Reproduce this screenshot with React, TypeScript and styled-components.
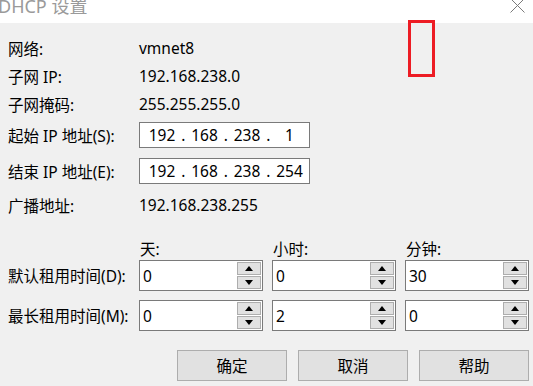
import { Fragment } from "react";
import styled, { createGlobalStyle } from "styled-components";

const GlobalStyle = createGlobalStyle`
  body {
    margin: 0;
    background: #f0f0f0;
  }
  * {
    box-sizing: border-box;
  }
`;

const Window = styled.div`
  position: relative;
  width: 533px;
  height: 386px;
  overflow: hidden;
  background: #f0f0f0;
  color: #000;
  font-family: "Noto Sans", "Noto Sans CJK SC", sans-serif;
  font-size: 15.5px;
`;

const TitleBar = styled.div`
  height: 23px;
  background: #fff;
  overflow: hidden;
  display: flex;
  align-items: flex-start;
  justify-content: space-between;
`;

const TitleText = styled.div`
  margin-left: -2px;
  margin-top: -3px;
  font-size: 18px;
  line-height: 18px;
  color: #9a9a9a;
`;

const CloseIcon = styled.svg`
  margin-right: 8px;
  margin-top: -2px;
  flex: none;
`;

const Body = styled.div`
  padding: 11px 0 0 8px;
`;

const Row = styled.div<{ $h: number; $mt?: number }>`
  display: flex;
  align-items: center;
  height: ${(p) => p.$h}px;
  margin-top: ${(p) => p.$mt ?? 0}px;
`;

const Label = styled.div`
  width: 131px;
  flex: none;
  white-space: nowrap;
`;

const Value = styled.div`
  white-space: nowrap;
`;

const IpBox = styled.div`
  width: 171px;
  height: 26px;
  background: #fff;
  border: 1px solid #7a7a7a;
  display: flex;
  align-items: center;
  padding-left: 5px;
`;

const IpField = styled.span`
  width: 34px;
  text-align: center;
`;

const IpDot = styled.span`
  width: 8.5px;
  text-align: center;
`;

const GridRow = styled.div<{ $h: number; $mt: number }>`
  display: grid;
  grid-template-columns: 122px repeat(3, 124px);
  column-gap: 9px;
  align-items: center;
  height: ${(p) => p.$h}px;
  margin-top: ${(p) => p.$mt}px;
`;

const GridLabel = styled.div`
  white-space: nowrap;
`;

const ColHead = styled.div`
  padding-left: 1px;
`;

const SpinBox = styled.div`
  display: flex;
  height: 31px;
  background: #fff;
  border: 1px solid #7a7a7a;
  padding: 1px;
`;

const SpinValue = styled.div`
  flex: 1;
  display: flex;
  align-items: center;
  padding-left: 2px;
`;

const SpinButtons = styled.div`
  width: 24px;
  display: flex;
  flex-direction: column;
  gap: 1px;
`;

const SpinButton = styled.div`
  flex: 1;
  background: #e1e1e1;
  border: 1px solid #adadad;
  display: flex;
  align-items: center;
  justify-content: center;
`;

const Arrow = styled.span<{ $down?: boolean }>`
  width: 0;
  height: 0;
  border-left: 4.5px solid transparent;
  border-right: 4.5px solid transparent;
  ${(p) =>
    p.$down ? "border-top: 5px solid #000;" : "border-bottom: 5px solid #000;"}
`;

const ButtonBar = styled.div`
  display: flex;
  justify-content: flex-end;
  gap: 11px;
  padding-right: 4px;
  margin-top: 19px;
`;

const DlgButton = styled.div`
  width: 110px;
  height: 31px;
  background: #e1e1e1;
  border: 1px solid #adadad;
  display: flex;
  align-items: center;
  justify-content: center;
`;

const Marker = styled.div`
  position: absolute;
  left: 408px;
  top: 20px;
  width: 27px;
  height: 57px;
  border: 3px solid #ed1c24;
`;

const IpInput = ({ parts }: { parts: string[] }) => (
  <IpBox>
    {parts.map((p, i) => (
      <Fragment key={i}>
        {i > 0 && <IpDot>.</IpDot>}
        <IpField>{p}</IpField>
      </Fragment>
    ))}
  </IpBox>
);

const Spin = ({ value }: { value: string }) => (
  <SpinBox>
    <SpinValue>{value}</SpinValue>
    <SpinButtons>
      <SpinButton>
        <Arrow />
      </SpinButton>
      <SpinButton>
        <Arrow $down />
      </SpinButton>
    </SpinButtons>
  </SpinBox>
);

export default function App() {
  return (
    <>
      <GlobalStyle />
      <Window>
        <TitleBar>
          <TitleText>DHCP 设置</TitleText>
          <CloseIcon width="15" height="15" viewBox="0 0 15 15">
            <path d="M0.5 0.5 L14.5 14.5 M14.5 0.5 L0.5 14.5" stroke="#7a7a7a" strokeWidth="1" />
          </CloseIcon>
        </TitleBar>
        <Body>
          <Row $h={28}>
            <Label>网络:</Label>
            <Value>vmnet8</Value>
          </Row>
          <Row $h={28}>
            <Label>子网 IP:</Label>
            <Value>192.168.238.0</Value>
          </Row>
          <Row $h={28}>
            <Label>子网掩码:</Label>
            <Value>255.255.255.0</Value>
          </Row>
          <Row $h={26} $mt={4}>
            <Label>起始 IP 地址(S):</Label>
            <IpInput parts={["192", "168", "238", "1"]} />
          </Row>
          <Row $h={26} $mt={10}>
            <Label>结束 IP 地址(E):</Label>
            <IpInput parts={["192", "168", "238", "254"]} />
          </Row>
          <Row $h={28} $mt={7}>
            <Label>广播地址:</Label>
            <Value>192.168.238.255</Value>
          </Row>
          <GridRow $h={20} $mt={18}>
            <span />
            <ColHead>天:</ColHead>
            <ColHead>小时:</ColHead>
            <ColHead>分钟:</ColHead>
          </GridRow>
          <GridRow $h={31} $mt={3}>
            <GridLabel>默认租用时间(D):</GridLabel>
            <Spin value="0" />
            <Spin value="0" />
            <Spin value="30" />
          </GridRow>
          <GridRow $h={31} $mt={9}>
            <GridLabel>最长租用时间(M):</GridLabel>
            <Spin value="0" />
            <Spin value="2" />
            <Spin value="0" />
          </GridRow>
          <ButtonBar>
            <DlgButton>确定</DlgButton>
            <DlgButton>取消</DlgButton>
            <DlgButton>帮助</DlgButton>
          </ButtonBar>
        </Body>
        <Marker />
      </Window>
    </>
  );
}
